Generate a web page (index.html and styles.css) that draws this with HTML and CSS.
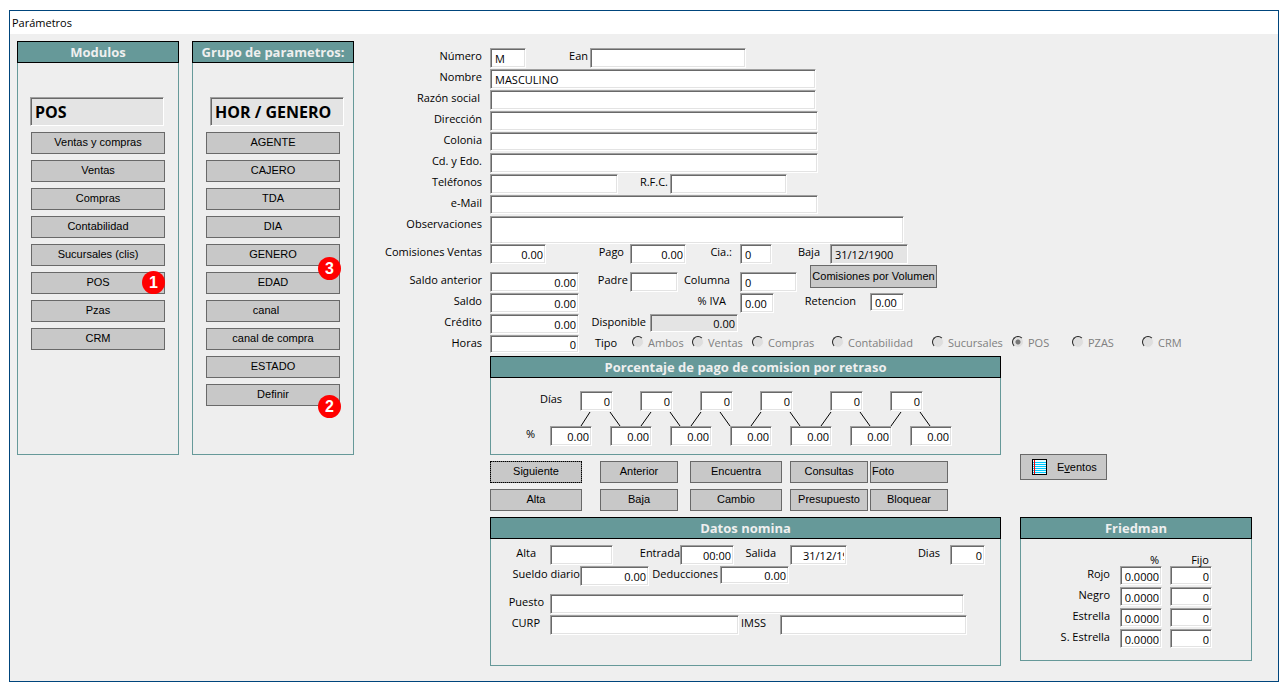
FILE: index.html
```html
<!DOCTYPE html>
<html lang="es">
<head>
<meta charset="utf-8">
<title>Parámetros</title>
<link rel="stylesheet" href="styles.css">
</head>
<body>
<div class="window">
  <header class="titlebar">Parámetros</header>
  <main class="content">
    <section class="panel side">
      <h2 class="panel-title">Modulos</h2>
      <div class="side-body">
        <input class="field current" type="text" value="POS" aria-label="Modulo actual" readonly>
        <button class="btn" type="button">Ventas y compras</button>
        <button class="btn" type="button">Ventas</button>
        <button class="btn" type="button">Compras</button>
        <button class="btn" type="button">Contabilidad</button>
        <button class="btn" type="button">Sucursales (clis)</button>
        <div class="step"><button class="btn" type="button">POS</button><span class="badge badge-one">1</span></div>
        <button class="btn" type="button">Pzas</button>
        <button class="btn" type="button">CRM</button>
      </div>
    </section>

    <section class="panel side">
      <h2 class="panel-title">Grupo de parametros:</h2>
      <div class="side-body groups">
        <input class="field current" type="text" value="HOR / GENERO" aria-label="Grupo actual" readonly>
        <button class="btn" type="button">AGENTE</button>
        <button class="btn" type="button">CAJERO</button>
        <button class="btn" type="button">TDA</button>
        <button class="btn" type="button">DIA</button>
        <div class="step"><button class="btn" type="button">GENERO</button><span class="badge badge-three">3</span></div>
        <button class="btn" type="button">EDAD</button>
        <button class="btn canal" type="button">canal</button>
        <button class="btn" type="button">canal de compra</button>
        <button class="btn" type="button">ESTADO</button>
        <div class="step"><button class="btn" type="button">Definir</button><span class="badge badge-two">2</span></div>
      </div>
    </section>

    <form class="form">
      <div class="row cols-numero">
        <label class="lead" for="numero">Número</label><input class="field" id="numero" type="text" value="M">
        <label class="g2" for="ean">Ean</label><input class="field" id="ean" type="text">
      </div>
      <div class="row cols-nombre"><label class="lead" for="nombre">Nombre</label><input class="field" id="nombre" type="text" value="MASCULINO"></div>
      <div class="row cols-nombre"><label class="lead wide-gap" for="razon">Razón social</label><input class="field" id="razon" type="text"></div>
      <div class="row cols-line"><label class="lead" for="direccion">Dirección</label><input class="field" id="direccion" type="text"></div>
      <div class="row cols-line"><label class="lead" for="colonia">Colonia</label><input class="field short" id="colonia" type="text"></div>
      <div class="row cols-line"><label class="lead" for="ciudad">Cd. y Edo.</label><input class="field" id="ciudad" type="text"></div>
      <div class="row cols-tel">
        <label class="lead" for="tel">Teléfonos</label><input class="field" id="tel" type="text">
        <label class="g2" for="rfc">R.F.C.</label><input class="field" id="rfc" type="text">
      </div>
      <div class="row cols-line"><label class="lead" for="mail">e-Mail</label><input class="field short" id="mail" type="text"></div>
      <div class="row cols-obs"><label class="lead" for="obs">Observaciones</label><textarea class="field" id="obs"></textarea></div>
      <div class="row cols-comisiones">
        <label class="lead" for="comventas">Comisiones Ventas</label><input class="field num" id="comventas" type="text" value="0.00">
        <label class="g6" for="pago">Pago</label><input class="field num" id="pago" type="text" value="0.00">
        <label class="g8" for="cia">Cia.:</label><input class="field" id="cia" type="text" value="0">
        <label class="g10" for="fbaja">Baja</label><input class="field off" id="fbaja" type="text" value="31/12/1900" readonly>
      </div>
      <div class="row cols-anterior">
        <label class="lead" for="santerior">Saldo anterior</label><input class="field num" id="santerior" type="text" value="0.00">
        <label class="g2" for="padre">Padre</label><input class="field" id="padre" type="text">
        <label class="g10" for="columna">Columna</label><input class="field" id="columna" type="text" value="0">
        <button class="btn volume" type="button">Comisiones por Volumen</button>
      </div>
      <div class="row cols-saldo">
        <label class="lead" for="saldo">Saldo</label><input class="field num" id="saldo" type="text" value="0.00">
        <label class="g14" for="iva">% IVA</label><input class="field" id="iva" type="text" value="0.00">
        <label class="g14" for="retencion">Retencion</label><input class="field low" id="retencion" type="text" value="0.00">
      </div>
      <div class="row cols-credito">
        <label class="lead" for="credito">Crédito</label><input class="field num" id="credito" type="text" value="0.00">
        <label class="g4" for="disponible">Disponible</label><input class="field num off low" id="disponible" type="text" value="0.00" readonly>
      </div>
      <div class="row cols-horas">
        <label class="lead" for="horas">Horas</label><input class="field num low" id="horas" type="text" value="0">
        <div class="types" role="radiogroup" aria-labelledby="tipo">
          <span id="tipo">Tipo</span>
          <label><input type="radio" name="tipo" disabled>Ambos</label>
          <label><input type="radio" name="tipo" disabled>Ventas</label>
          <label><input type="radio" name="tipo" disabled>Compras</label>
          <label><input type="radio" name="tipo" disabled>Contabilidad</label>
          <label><input type="radio" name="tipo" disabled>Sucursales</label>
          <label><input type="radio" name="tipo" checked disabled>POS</label>
          <label><input type="radio" name="tipo" disabled>PZAS</label>
          <label><input type="radio" name="tipo" disabled>CRM</label>
        </div>
      </div>

      <div class="lower">
        <div class="lower-main">
          <section class="panel">
            <h2 class="panel-title">Porcentaje de pago de comision por retraso</h2>
            <div class="delay">
              <div class="delay-days">
                <span>Días</span>
                <input class="field num" type="text" value="0" aria-label="Días 1">
                <input class="field num" type="text" value="0" aria-label="Días 2">
                <input class="field num" type="text" value="0" aria-label="Días 3">
                <input class="field num" type="text" value="0" aria-label="Días 4">
                <input class="field num" type="text" value="0" aria-label="Días 5">
                <input class="field num" type="text" value="0" aria-label="Días 6">
              </div>
              <svg class="links" width="400" height="14" viewBox="0 0 400 14" aria-hidden="true">
                <path d="M40 0L31 14M60 0L70 14M101 0L91 14M120 0L130 14M151 0L141 14M170 0L180 14M211 0L201 14M240 0L250 14M281 0L271 14M310 0L320 14M351 0L341 14M370 0L380 14" fill="none" stroke="#000"/>
              </svg>
              <div class="delay-pct">
                <span>%</span>
                <input class="field num" type="text" value="0.00" aria-label="Porcentaje 1">
                <input class="field num" type="text" value="0.00" aria-label="Porcentaje 2">
                <input class="field num" type="text" value="0.00" aria-label="Porcentaje 3">
                <input class="field num" type="text" value="0.00" aria-label="Porcentaje 4">
                <input class="field num" type="text" value="0.00" aria-label="Porcentaje 5">
                <input class="field num" type="text" value="0.00" aria-label="Porcentaje 6">
                <input class="field num" type="text" value="0.00" aria-label="Porcentaje 7">
              </div>
            </div>
          </section>

          <div class="actions">
            <button class="btn large focused" type="button">Siguiente</button>
            <button class="btn" type="button">Anterior</button>
            <button class="btn large" type="button">Encuentra</button>
            <button class="btn" type="button">Consultas</button>
            <button class="btn start" type="button">Foto</button>
            <button class="btn large" type="button">Alta</button>
            <button class="btn" type="button">Baja</button>
            <button class="btn large" type="button">Cambio</button>
            <button class="btn" type="button">Presupuesto</button>
            <button class="btn" type="button">Bloquear</button>
          </div>

          <section class="panel">
            <h2 class="panel-title">Datos nomina</h2>
            <div class="payroll">
              <div class="row cols-alta">
                <label class="g14" for="falta">Alta</label><input class="field" id="falta" type="text">
                <label class="g0" for="entrada">Entrada</label><input class="field num" id="entrada" type="text" value="00:00">
                <label class="g14" for="salida">Salida</label><input class="field date" id="salida" type="text" value="31/12/1900">
                <label class="g10" for="dias">Dias</label><input class="field num" id="dias" type="text" value="0">
              </div>
              <div class="row cols-sueldo">
                <label class="g0" for="sueldo">Sueldo diario</label><input class="field num" id="sueldo" type="text" value="0.00">
                <label class="g2" for="deducciones">Deducciones</label><input class="field num low" id="deducciones" type="text" value="0.00">
              </div>
              <div class="row cols-puesto"><label class="g6" for="puesto">Puesto</label><input class="field" id="puesto" type="text"></div>
              <div class="row cols-curp">
                <label class="g10" for="curp">CURP</label><input class="field" id="curp" type="text">
                <label class="g14" for="imss">IMSS</label><input class="field" id="imss" type="text">
              </div>
            </div>
          </section>
        </div>

        <div class="lower-side">
          <button class="btn events" type="button">
            <svg width="15" height="16" viewBox="0 0 15 16" shape-rendering="crispEdges" aria-hidden="true">
              <rect width="15" height="16" fill="#000"/>
              <rect x="1" y="1" width="13" height="14" fill="#e8ffff"/>
              <path d="M1 3.5h13M1 5.5h13M1 7.5h13M1 9.5h13M1 11.5h13M1 13.5h13" fill="none" stroke="#00c8ff"/>
              <path d="M2.5 1v14" fill="none" stroke="#f00"/>
            </svg>
            <span>E<u>v</u>entos</span>
          </button>
          <section class="panel">
            <h2 class="panel-title">Friedman</h2>
            <table class="friedman">
              <thead><tr><td></td><th scope="col">%</th><th scope="col">Fijo</th></tr></thead>
              <tbody>
                <tr><th scope="row">Rojo</th><td><input class="field num short" type="text" value="0.0000" aria-label="Rojo %"></td><td><input class="field num short" type="text" value="0" aria-label="Rojo fijo"></td></tr>
                <tr><th scope="row">Negro</th><td><input class="field num short" type="text" value="0.0000" aria-label="Negro %"></td><td><input class="field num short" type="text" value="0" aria-label="Negro fijo"></td></tr>
                <tr><th scope="row">Estrella</th><td><input class="field num short" type="text" value="0.0000" aria-label="Estrella %"></td><td><input class="field num short" type="text" value="0" aria-label="Estrella fijo"></td></tr>
                <tr><th scope="row">S. Estrella</th><td><input class="field num short" type="text" value="0.0000" aria-label="S. Estrella %"></td><td><input class="field num short" type="text" value="0" aria-label="S. Estrella fijo"></td></tr>
              </tbody>
            </table>
          </section>
        </div>
      </div>
    </form>
  </main>
</div>
</body>
</html>
```
FILE: styles.css
```css
* { box-sizing: border-box; }

body {
  margin: 0;
  min-height: 100vh;
  padding: 10px 8px 9px 9px;
  display: flex;
  background: #fff;
  color: #000;
  font: 11px/16px "Open Sans", "Noto Sans", sans-serif;
}

.window {
  flex: 1;
  display: flex;
  flex-direction: column;
  border: 1px solid #00457c;
  background: #efefef;
}

.titlebar {
  height: 23px;
  padding: 4px 2px;
  background: #fff;
}

.content {
  flex: 1;
  display: flex;
  align-items: flex-start;
  padding: 7px;
}

/* Panels */
.panel { background: #eee; border: 1px solid #699; border-top: 0; }

.panel-title {
  margin: 0 -1px;
  height: 22px;
  border: 1px solid #000;
  background: #699;
  color: #efefef;
  font-size: 13px;
  font-weight: 700;
  line-height: 20px;
  text-align: center;
  white-space: nowrap;
}

.side { flex: none; width: 162px; margin-right: 13px; }
.side + .side { margin-right: 0; }

.side-body {
  display: flex;
  flex-direction: column;
  gap: 6px;
  padding: 34px 13px 48px;
}
.side:first-child .side-body { padding-bottom: 104px; }

.side-body .current {
  height: 29px;
  width: 134px;
  margin-left: -1px;
  background: #e4e4e4;
  font-size: 16px;
  font-weight: 700;
}
.groups .current { margin-left: 4px; }

/* Controls */
.btn {
  display: block;
  width: 100%;
  height: 22px;
  padding: 0 0 2px;
  border: 1px solid #696969;
  border-radius: 0;
  background: #c8c8c8;
  color: #000;
  font: 11px/16px "Liberation Sans", Arial, sans-serif;
  white-space: nowrap;
}
.canal { padding-right: 14px; }
.start { text-align: left; padding-left: 1px; }
.focused { outline: 1px dotted #000; outline-offset: -1px; }

.step { position: relative; }

.badge {
  position: absolute;
  right: 0;
  width: 23px;
  height: 23px;
  border-radius: 50%;
  background: #f00;
  color: #fff;
  font: bold 16px/23px "Liberation Sans", Arial, sans-serif;
  text-align: center;
}
.badge-one { top: -1px; }
.badge-two { top: 11px; right: -1px; }
.badge-three { top: 13px; right: -1px; }

.field {
  display: block;
  width: 100%;
  min-width: 0;
  height: 20px;
  margin: 0;
  padding: 1px 2px 0 4px;
  border: 1px solid;
  border-color: #a0a0a0 #fff #fff #a0a0a0;
  border-radius: 0;
  outline: 0;
  background: #fff;
  box-shadow: inset 1px 1px #696969, inset -1px -1px #e3e3e3;
  color: #000;
  font: inherit;
  resize: none;
}
.num { text-align: right; padding-left: 2px; }
.off { background: #e4e4e4; }
.short { height: 19px; }
.low { height: 18px; }
.date { padding-left: 12px; }

/* Form rows */
.form { flex: 1; min-width: 0; padding-top: 7px; }

.row { display: grid; min-height: 21px; align-items: start; }
.row > label { text-align: right; white-space: nowrap; overflow: hidden; }
.row > .lead { padding-right: 8px; }
.row > .wide-gap { padding-right: 10px; }
.row > .g2 { padding-right: 2px; }
.row > .g4 { padding-right: 4px; }
.row > .g6 { padding-right: 6px; }
.row > .g8 { padding-right: 8px; }
.row > .g10 { padding-right: 10px; }
.row > .g14 { padding-right: 14px; }

.cols-numero { grid-template-columns: 136px 36px 64px 156px; }
.cols-nombre { grid-template-columns: 136px 326px; }
.cols-line { grid-template-columns: 136px 328px; }
.cols-tel { grid-template-columns: 136px 128px 52px 117px; }
.cols-obs { grid-template-columns: 136px 414px; }
.cols-obs .field { height: 28px; }
.cols-comisiones { grid-template-columns: 136px 56px 84px 56px 54px 32px 58px 78px; }
.cols-anterior { grid-template-columns: 136px 89px 51px 48px 62px 57px 140px; min-height: 28px; padding-top: 7px; }
.cols-saldo { grid-template-columns: 136px 89px 161px 34px 96px 34px; }
.cols-credito { grid-template-columns: 136px 89px 71px 88px; }
.cols-horas { grid-template-columns: 136px 89px 1fr; }

.volume { width: 127px; height: 23px; margin: -7px 0 0 13px; }

.types {
  display: grid;
  grid-template-columns: 37px 60px 60px 80px 100px 80px 60px 70px 60px;
  padding-left: 16px;
}
.types label { display: flex; gap: 4px; color: #808080; }
.types input {
  appearance: none;
  flex: none;
  width: 12px;
  height: 12px;
  margin: 1px 0 0;
  border: 1px solid;
  border-color: #222 #eee #eee #222;
  border-radius: 50%;
  background: #dedede;
}
.types input:checked { background: radial-gradient(circle, #777 0 2px, #dedede 3px); }

/* Lower area */
.lower { display: flex; gap: 19px; padding-left: 136px; }
.lower-main { flex: none; width: 511px; }
.lower-side { flex: none; width: 232px; padding-top: 98px; }

.delay { padding: 13px 0 8px; }
.delay-days, .delay-pct { display: grid; align-items: start; }
.delay-days {
  grid-template-columns: 13px 33px 33px 33px 43px 33px 33px;
  column-gap: 27px;
  padding-left: 49px;
}
.delay-days .field { width: 33px; }
.delay-pct { grid-template-columns: 6px repeat(7, 42px); column-gap: 18px; padding-left: 35px; }
.links { display: block; margin: 1px 0 0 59px; }

.actions {
  display: grid;
  grid-template-columns: 110px 90px 100px 80px 78px;
  row-gap: 6px;
  padding: 6px 0;
}
.actions .btn { width: 78px; }
.actions .large { width: 92px; }

.payroll { padding: 6px 0 29px; }
.cols-alta { grid-template-columns: 59px 63px 67px 54px 56px 57px 103px 35px; }
.cols-sueldo { grid-template-columns: 89px 69px 71px 69px; margin-bottom: 7px; }
.cols-puesto { grid-template-columns: 59px 414px; }
.cols-curp { grid-template-columns: 59px 189px 41px 187px; }

.events {
  display: flex;
  align-items: center;
  gap: 10px;
  width: 87px;
  height: 26px;
  margin-bottom: 37px;
  padding: 0 0 0 11px;
}

.friedman { border-collapse: collapse; margin: 15px 0 10px; }
.friedman td, .friedman th { padding: 0; height: 21px; font-weight: 400; text-align: right; vertical-align: top; }
.friedman thead th, .friedman thead td { height: 12px; padding-right: 11px; line-height: 12px; }
.friedman tbody th { width: 99px; padding-right: 10px; }
.friedman tbody td { width: 50px; padding-right: 8px; }
```
